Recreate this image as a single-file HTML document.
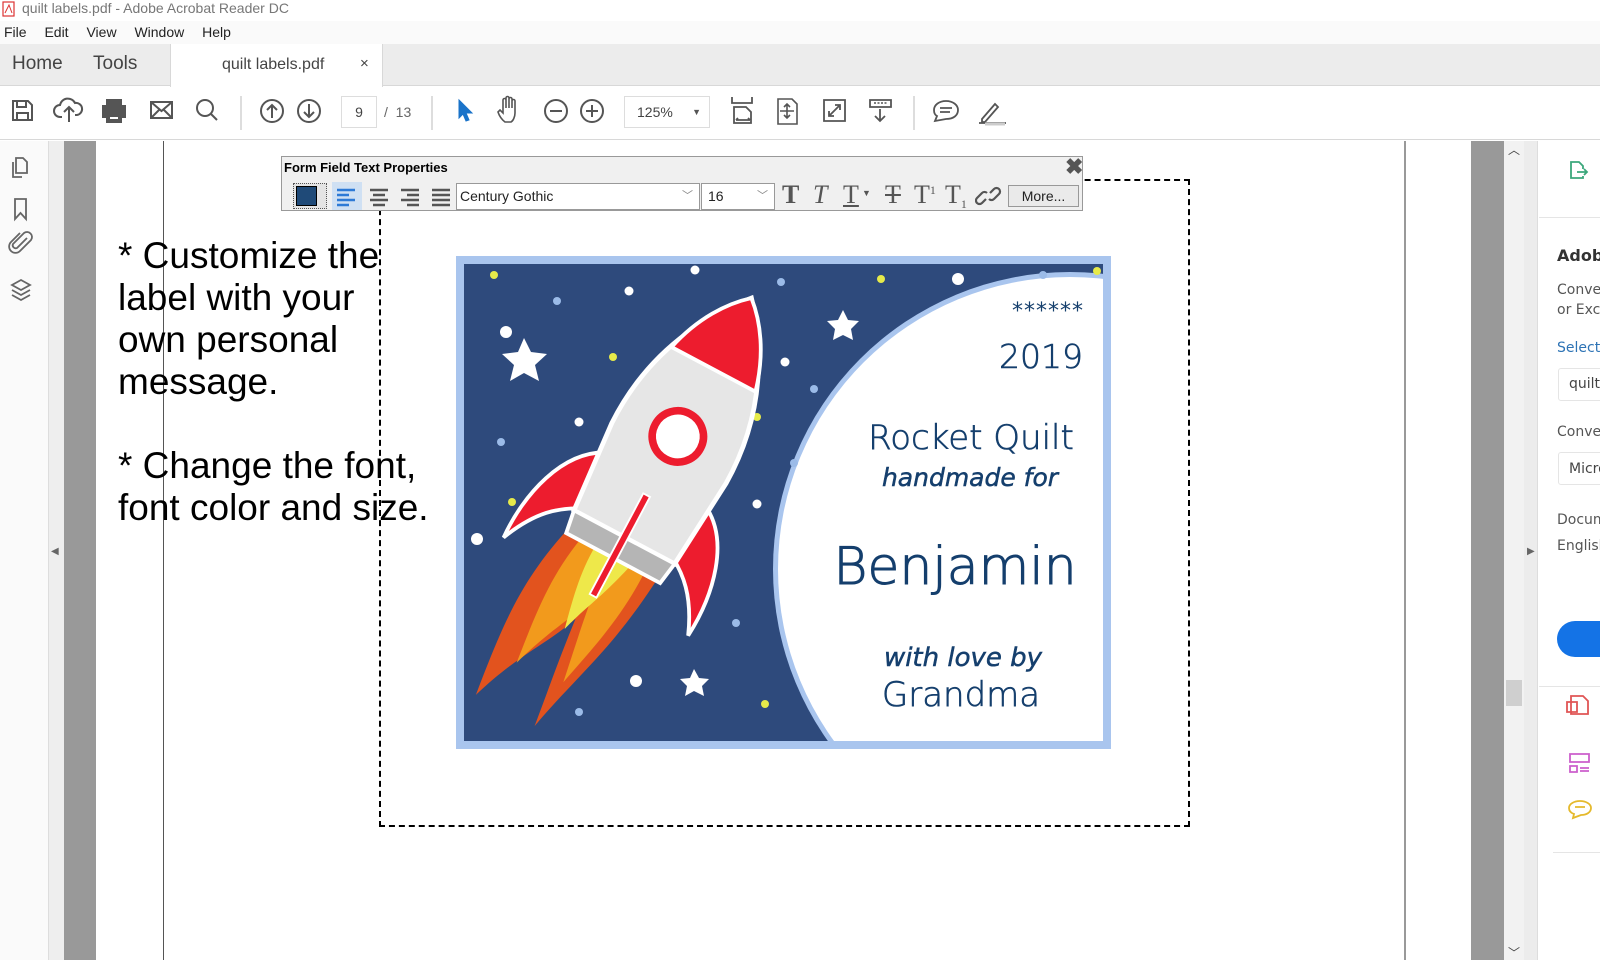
<!DOCTYPE html>
<html><head><meta charset="utf-8">
<style>
*{margin:0;padding:0;box-sizing:border-box}
body{width:1600px;height:960px;overflow:hidden;position:relative;background:#fff;font-family:"Liberation Sans",Arial,sans-serif;color:#333}
.a{position:absolute;white-space:nowrap}
.ui{font-family:"DejaVu Sans","Liberation Sans",sans-serif}
.t{position:absolute;top:180px;font-family:'Liberation Serif',serif;font-size:26px;color:#555}
</style></head><body>
<!-- title bar -->
<div class="a" style="left:0;top:0;width:1600px;height:21px;background:#fff"></div>
<svg class="a" style="left:2px;top:1px" width="14" height="16"><rect x="1" y="1" width="11" height="14" fill="#fff" stroke="#d33" stroke-width="1.2"/><path d="M3 12 L7 4 L10 12" stroke="#d33" fill="none"/></svg>
<div class="a" style="left:22px;top:0;font-size:14px;color:#777;line-height:16px">quilt labels.pdf - Adobe Acrobat Reader DC</div>
<!-- menu -->
<div class="a" style="left:0;top:21px;width:1600px;height:23px;background:#fafafa"></div>
<div class="a" style="left:4px;top:24px;font-size:14px;color:#222;word-spacing:14px">File Edit View Window Help</div>
<!-- tab bar -->
<div class="a" style="left:0;top:44px;width:1600px;height:42px;background:#ececec;border-bottom:1px solid #d8d8d8"></div>
<div class="a" style="left:12px;top:53px;font-size:19px;color:#444">Home</div>
<div class="a" style="left:93px;top:53px;font-size:19px;color:#444">Tools</div>
<div class="a" style="left:170px;top:44px;width:213px;height:43px;background:#fff;border-right:1px solid #d8d8d8;border-left:1px solid #d8d8d8"></div>
<div class="a" style="left:222px;top:56px;font-size:16px;color:#444">quilt labels.pdf</div>
<div class="a" style="left:360px;top:55px;font-size:15px;color:#444">×</div>
<!-- toolbar -->
<div class="a" style="left:0;top:87px;width:1600px;height:53px;background:#fff;border-bottom:1px solid #d8d8d8"></div>
<svg class="a" style="left:0;top:87px" width="1020" height="53" fill="none" stroke="#555" stroke-width="2">
 <path d="M13 14h15l4 4v15H13z M17 14v6h9v-6 M17 33v-7h11v7"/>
 <path d="M62 30h-2a6 6 0 0 1 0-12a8 8 0 0 1 15-2a6 6 0 0 1 2 12h-2 M69 35v-14 M64 25l5-5 5 5"/>
 <path d="M107 13h14v6h-14z M103 19h22v11h-22z M107 26h14v9h-14z" fill="#555"/><path d="M110 31h8" stroke="#fff"/>
 <path d="M151 15h21v16h-21z M151 15l10.5 9 10.5-9 M151 31l8-8 M172 31l-8-8"/>
 <circle cx="205" cy="21" r="8"/><path d="M211 27l6 6"/>
 <path d="M241 9v34" stroke="#ddd"/>
 <circle cx="272" cy="24" r="11"/><path d="M272 31v-13 M267 23l5-5 5 5"/>
 <circle cx="309" cy="24" r="11"/><path d="M309 17v13 M304 25l5 5 5-5"/>
 <path d="M432 9v34" stroke="#ddd"/>
 <path d="M459 13v18l4-4 3 7 3-1-3-7h6z" fill="#1a73c9" stroke="#1a73c9" stroke-width="1"/>
 <path d="M505 35c-4-3-6-7-7-10l2-2 3 3v-13a1.5 1.5 0 0 1 3 0v8v-10a1.5 1.5 0 0 1 3 0v10v-9a1.5 1.5 0 0 1 3 0v9v-7a1.5 1.5 0 0 1 3 0v12c0 4-2 8-4 9z" stroke-width="1.6"/>
 <circle cx="556" cy="24" r="11"/><path d="M550 24h12"/>
 <circle cx="592" cy="24" r="11"/><path d="M586 24h12 M592 18v12"/>
 <path d="M732 10v6h20v-6 M734 20h12l5 5v11h-17z M736 33h14 M736 33l2-2 M750 33l-2-2" stroke-width="1.8"/>
 <path d="M778 12h14l5 5v20h-19z M787 17v14 M780 24h14 M784 20l3-3 3 3 M784 28l3 3 3-3" stroke-width="1.6"/>
 <path d="M824 13h21v21h-21z M830 28l9-9 M835 18h5v5 M829 24v5h5" stroke-width="1.8"/>
 <path d="M870 13h21v7h-21z M880 22v12 M875 29l5 5 5-5" stroke-width="1.8"/><path d="M874 16h13" stroke-dasharray="2 1.5" stroke-width="1.5"/>
 <path d="M914 9v34" stroke="#ddd"/>
 <path d="M946 32c8 0 12-4 12-9s-5-9-12-9-12 4-12 9c0 3 1 5 3 6l-2 5z M940 21h12 M940 25h10" stroke-width="1.8"/>
 <path d="M982 32l13-15 3 3-13 15h-3z M979 36h27" stroke-width="1.8"/><path d="M985 37h20" stroke="#ccc" stroke-width="3"/>
</svg>
<div class="a" style="left:341px;top:96px;width:36px;height:32px;border:1px solid #ddd;background:#fff;font-size:14px;text-align:center;line-height:30px;color:#444">9</div>
<div class="a" style="left:384px;top:104px;font-size:14px;color:#666">/&nbsp; 13</div>
<div class="a" style="left:624px;top:96px;width:86px;height:32px;border:1px solid #ddd;background:#fff;font-size:14px;line-height:30px;color:#444;padding-left:12px">125%<span style="position:absolute;right:8px;font-size:9px;color:#555">▼</span></div>
<!-- left sidebar -->
<div class="a" style="left:0;top:141px;width:49px;height:819px;background:#fafafa;border-right:1px solid #ddd"></div>
<svg class="a" style="left:0;top:141px" width="49" height="180" fill="none" stroke="#666" stroke-width="1.8">
 <path d="M16 17h7l4 4v11h-11z M13 21v15h9"/>
 <path d="M15 58h11v20l-5.5-6-5.5 6z"/>
 <path d="M27 97l-10 10a3 3 0 0 1-4-4l11-11a5 5 0 0 1 7 7l-11 11a6 6 0 0 1-9-9l9-9"/>
 <path d="M21 139l-9 5 9 5 9-5z M12 149l9 5 9-5 M12 154l9 5 9-5"/>
</svg>
<div class="a" style="left:49px;top:141px;width:15px;height:819px;background:#eeeeee"></div>
<div class="a" style="left:51px;top:546px;font-size:10px;color:#666">◀</div>
<div class="a" style="left:64px;top:141px;width:32px;height:819px;background:#999"></div>
<!-- page -->
<div class="a" style="left:163px;top:141px;width:1px;height:819px;background:#555"></div>
<div class="a" style="left:1404px;top:141px;width:2px;height:819px;background:#999"></div>
<div class="a" style="left:1471px;top:141px;width:33px;height:819px;background:#999"></div>
<div class="a" style="left:1504px;top:141px;width:20px;height:819px;background:#f2f2f2"></div>
<div class="a" style="left:1506px;top:680px;width:16px;height:26px;background:#cfcfcf"></div>
<div class="a" style="left:1508px;top:141px;font-size:12px;color:#444">︿</div>
<div class="a" style="left:1508px;top:944px;font-size:12px;color:#444">﹀</div>
<div class="a" style="left:1524px;top:141px;width:14px;height:819px;background:#ececec;border-right:1px solid #ddd"></div>
<div class="a" style="left:1527px;top:546px;font-size:10px;color:#666">▶</div>
<!-- right panel -->
<div class="a" style="left:1539px;top:141px;width:61px;height:819px;background:#fff;overflow:hidden">
<svg class="a" style="left:0;top:0" width="61" height="720" fill="none" stroke-width="1.8">
 <path d="M32 30v-9h8l4 4v3 M32 30v7h12v-2 M38 31h10 M45 28l3 3-3 3" stroke="#3ba77b"/>
 <path d="M32 555h12l5 5v13h-17z M28 561h10v10h-10z" stroke="#e05555"/>
 <path d="M31 613h19v8h-19z M31 625h7v6h-7z M41 627h9 M41 630h9" stroke="#cc5fcc"/>
 <path d="M42 674c6 0 10-3 10-7s-5-7-11-7-11 3-11 7c0 3 2 5 5 6l-1 4z M36 666h10" stroke="#e5b92c"/>
</svg>
<div class="a" style="left:0;top:76px;width:61px;height:1px;background:#e5e5e5"></div>
<div class="a" style="left:0;top:545px;width:61px;height:1px;background:#e5e5e5"></div>
<div class="a" style="left:14px;top:711px;width:47px;height:1px;background:#e5e5e5"></div>
<div class="a ui" style="left:18px;top:105px;font-size:16px;font-weight:bold;color:#333">Adobe</div>
<div class="a ui" style="left:18px;top:139px;font-size:14px;color:#555;line-height:20px">Convert<br>or Excel</div>
<div class="a ui" style="left:18px;top:199px;font-size:14px;color:#2d73b5">Select</div>
<div class="a" style="left:19px;top:227px;width:50px;height:33px;border:1px solid #e5e5e5;border-radius:3px"></div>
<div class="a ui" style="left:30px;top:235px;font-size:14px;color:#444">quilt</div>
<div class="a ui" style="left:18px;top:283px;font-size:14px;color:#555">Convert</div>
<div class="a" style="left:19px;top:311px;width:50px;height:33px;border:1px solid #e5e5e5;border-radius:3px"></div>
<div class="a ui" style="left:30px;top:320px;font-size:14px;color:#444">Micro</div>
<div class="a ui" style="left:18px;top:366px;font-size:14px;color:#555;line-height:26px">Document<br>English</div>
<div class="a" style="left:18px;top:480px;width:60px;height:36px;border-radius:18px;background:#1473e6"></div>
</div>

<!-- left instructions -->
<div class="a" style="left:118px;top:235px;font-size:37px;line-height:42px;color:#000">* Customize the<br>label with your<br>own personal<br>message.<br><br>* Change the font,<br>font color and size.</div>
<!-- dashed field -->
<div class="a" style="left:379px;top:179px;width:811px;height:648px;border:2px dashed #000"></div>
<!-- label -->
<svg class="a" style="left:0;top:0" width="1600" height="960">
 <rect x="456" y="256" width="655" height="493" fill="#a9c5ee"/>
 <rect x="464" y="264" width="639" height="477" fill="#2e4a7c"/>
 <clipPath id="c"><rect x="464" y="264" width="639" height="477"/></clipPath>
 <g clip-path="url(#c)">
  <circle cx="1070" cy="569" r="297" fill="#a9c5ee"/>
  <circle cx="1070" cy="569" r="292" fill="#fff"/>
  <rect x="1103" y="264" width="8" height="477" fill="#a9c5ee"/>
 </g>
 <g fill="#e6ea4a"><circle cx="494" cy="275" r="4"/><circle cx="881" cy="279" r="4"/><circle cx="1097" cy="271" r="4"/><circle cx="613" cy="357" r="4"/><circle cx="757" cy="417" r="4"/><circle cx="512" cy="502" r="4"/><circle cx="520" cy="614" r="4"/><circle cx="765" cy="704" r="4"/></g>
 <g fill="#9bbbe8"><circle cx="557" cy="301" r="4"/><circle cx="781" cy="282" r="4"/><circle cx="1043" cy="275" r="4"/><circle cx="814" cy="389" r="4"/><circle cx="501" cy="442" r="4"/><circle cx="794" cy="463" r="4"/><circle cx="736" cy="623" r="4"/><circle cx="579" cy="712" r="4"/></g>
 <g fill="#fff"><circle cx="695" cy="270" r="4.5"/><circle cx="958" cy="279" r="6"/><circle cx="629" cy="291" r="4.5"/><circle cx="506" cy="332" r="6"/><circle cx="785" cy="362" r="4.5"/><circle cx="579" cy="422" r="4.5"/><circle cx="757" cy="504" r="4.5"/><circle cx="477" cy="539" r="6"/><circle cx="636" cy="681" r="6"/>
  <path d="M524 338l7 14 16 2-12 11 4 16-15-8-14 8 4-16-12-11 16-2z"/>
  <path d="M843 310l5 10 11 1-8 8 2 11-10-5-10 5 2-11-8-8 11-1z"/>
  <path d="M694 669l5 9 10 1-7 7 2 10-10-5-9 5 2-10-7-7 10-1z"/></g>
 <!-- rocket -->
 <g transform="translate(660 470) rotate(28) scale(0.95)">
  <path d="M-55 95 C-75 170 -70 220 -60 300 C-40 240 -20 220 -5 180 C0 230 5 260 10 300 C25 230 45 190 52 95z" fill="#e2531e"/>
  <path d="M-38 95 C-50 150 -45 190 -38 250 C-22 200 -10 185 0 155 C5 190 10 215 15 245 C28 190 38 150 36 95z" fill="#f29a1c"/>
  <path d="M-22 95 C-25 130 -18 160 -10 195 C-2 165 10 145 22 95z" fill="#eee84a"/>
  <path d="M-58 10 C-100 30 -115 90 -112 140 C-95 100 -75 85 -55 75z" fill="#ed1c2e" stroke="#fff" stroke-width="4"/>
  <path d="M58 10 C100 30 112 90 108 140 C92 100 72 85 55 75z" fill="#ed1c2e" stroke="#fff" stroke-width="4"/>
  <path d="M-60 80 L-68 -20 C-70 -110 -30 -170 0 -205 C30 -170 70 -110 68 -20 L60 80z" fill="#e6e6e6" stroke="#fff" stroke-width="5"/>
  <path d="M-60 80 L60 80 L56 105 L-56 105z" fill="#b5b5b5" stroke="#fff" stroke-width="4"/>
  <path d="M-50 -120 C-40 -160 -20 -188 0 -205 C20 -188 40 -160 50 -120z" fill="#ed1c2e" stroke="#fff" stroke-width="4"/>
  <circle cx="0" cy="-40" r="27" fill="#fff" stroke="#ed1c2e" stroke-width="8"/>
  <rect x="-4" y="30" width="8" height="120" fill="#ed1c2e" stroke="#fff" stroke-width="2"/>
 </g>
 <g fill="#153f6d" font-family="'DejaVu Sans','Liberation Sans',sans-serif">
  <text x="1084" y="318" font-size="22" text-anchor="end" letter-spacing="1">******</text>
  <text x="1083" y="368" font-size="33" text-anchor="end" font-weight="200" stroke="#153f6d" stroke-width="0.6">2019</text>
  <text x="971" y="449" font-size="34" text-anchor="middle" font-weight="200" stroke="#153f6d" stroke-width="0.6">Rocket Quilt</text>
  <text x="970" y="486" font-size="25" text-anchor="middle" font-style="italic" font-weight="200" stroke="#153f6d" stroke-width="0.5">handmade for</text>
  <text x="955" y="584" font-size="52" text-anchor="middle" font-weight="200" stroke="#153f6d" stroke-width="1">Benjamin</text>
  <text x="963" y="666" font-size="26" text-anchor="middle" font-style="italic" font-weight="200" stroke="#153f6d" stroke-width="0.5">with love by</text>
  <text x="961" y="706" font-size="34" text-anchor="middle" font-weight="200" stroke="#153f6d" stroke-width="0.6">Grandma</text>
 </g>
</svg>
<!-- form field dialog -->
<div class="a" style="left:281px;top:156px;width:802px;height:55px;background:#f0f0f0;border:1px solid #999"></div>
<div class="a" style="left:284px;top:160px;font-size:13px;font-weight:bold;color:#000">Form Field Text Properties</div>
<div class="a" style="left:1065px;top:154px;font-size:22px;font-weight:bold;color:#555">✖</div>
<div class="a" style="left:293px;top:183px;width:34px;height:26px;border:1px dotted #555;background:#e4e4e4"></div>
<div class="a" style="left:296px;top:186px;width:21px;height:20px;background:#1f4a78;border:1px solid #000"></div>
<div class="a" style="left:332px;top:182px;width:30px;height:28px;background:#cfe0f3"></div>
<svg class="a" style="left:332px;top:182px" width="130" height="28" stroke-width="2.5">
 <path d="M5 8h18M5 13h12M5 18h18M5 23h12" stroke="#2d7ad6"/>
 <path d="M38 8h18M41 13h12M38 18h18M41 23h12" stroke="#555"/>
 <path d="M69 8h18M75 13h12M69 18h18M75 23h12" stroke="#555"/>
 <path d="M100 8h18M100 13h18M100 18h18M100 23h18" stroke="#555"/>
</svg>
<div class="a" style="left:456px;top:183px;width:244px;height:27px;background:#fff;border:1px solid #999;font-size:14px;line-height:25px;padding-left:3px;color:#222">Century Gothic<span style="position:absolute;right:6px;color:#888;font-size:11px">﹀</span></div>
<div class="a" style="left:701px;top:183px;width:74px;height:27px;background:#fff;border:1px solid #999;font-size:14px;line-height:25px;padding-left:6px;color:#222">16<span style="position:absolute;right:6px;color:#888;font-size:11px">﹀</span></div>
<div class="t" style="left:782px;font-weight:bold">T</div>
<div class="t" style="left:813px;font-style:italic">T</div>
<div class="t" style="left:843px;text-decoration:underline">T</div>
<div class="a" style="left:862px;top:188px;font-size:9px;color:#555">▼</div>
<div class="t" style="left:885px;text-decoration:line-through">T</div>
<div class="t" style="left:914px">T<span style="font-size:12px;vertical-align:9px">1</span></div>
<div class="t" style="left:945px">T<span style="font-size:12px;vertical-align:-5px">1</span></div>
<svg class="a" style="left:975px;top:183px" width="28" height="26" fill="none" stroke="#555" stroke-width="2.2"><path d="M11 16l-4 4a3.5 3.5 0 0 1-5-5l5-5a3.5 3.5 0 0 1 5 0 M15 10l4-4a3.5 3.5 0 0 1 5 5l-5 5a3.5 3.5 0 0 1-5 0"/></svg>
<div class="a" style="left:1008px;top:185px;width:71px;height:22px;border:1px solid #999;background:#eaeaea;font-size:14px;text-align:center;line-height:20px;color:#222">More...</div>
</body></html>
